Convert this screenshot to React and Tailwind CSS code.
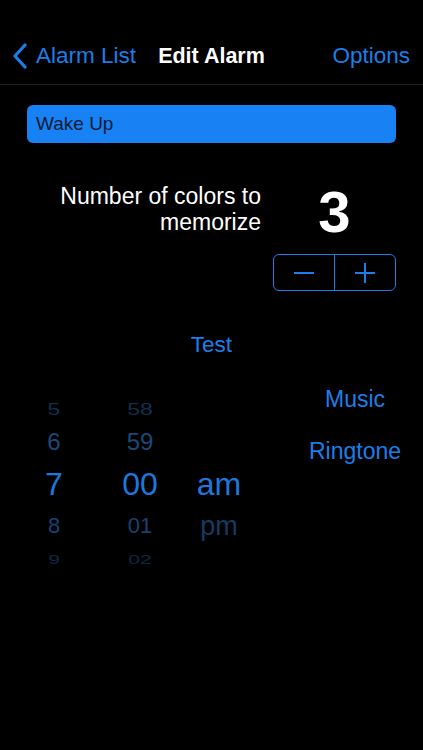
import React from 'react'

const font = { fontFamily: '"Liberation Sans", Arial, sans-serif' }

function Chevron() {
  return (
    <svg width="16" height="26" viewBox="0 0 16 26" className="shrink-0">
      <polyline points="13,2 3,13 13,24" fill="none" stroke="#1b7fe9" strokeWidth="3.2" strokeLinecap="round" strokeLinejoin="round" />
    </svg>
  )
}

function NavBar() {
  return (
    <div className="pt-[28px] border-b border-[#222226]">
      <div className="h-[56px] grid grid-cols-[1fr_auto_1fr] items-center">
        <div className="flex items-center pl-[12px] gap-[8px] text-[#1b7fe9] text-[22.5px]">
          <Chevron />
          <span>Alarm List</span>
        </div>
        <div className="text-white font-bold text-[21.5px]">Edit Alarm</div>
        <div className="text-right pr-[13px] text-[#1b7fe9] text-[22.5px]">Options</div>
      </div>
    </div>
  )
}

function Stepper() {
  return (
    <div className="mt-[13px] w-[123px] h-[37px] border-[1.5px] border-[#1b7fe9] rounded-[6px] flex">
      <div className="flex-1 flex items-center justify-center border-r-[1.5px] border-[#1b7fe9]">
        <svg width="22" height="4" viewBox="0 0 22 4">
          <line x1="1" y1="2" x2="21" y2="2" stroke="#1b7fe9" strokeWidth="2" />
        </svg>
      </div>
      <div className="flex-1 flex items-center justify-center">
        <svg width="22" height="22" viewBox="0 0 22 22">
          <line x1="1" y1="11" x2="21" y2="11" stroke="#1b7fe9" strokeWidth="2" />
          <line x1="11" y1="1" x2="11" y2="21" stroke="#1b7fe9" strokeWidth="2" />
        </svg>
      </div>
    </div>
  )
}

const rows = [
  { h: 'h-[26px]', size: 'text-[23px] scale-y-[0.68]', color: 'text-[#10304f]', hour: '5', min: '58', ap: '' },
  { h: 'h-[40px]', size: 'text-[24px]', color: 'text-[#1b4877]', hour: '6', min: '59', ap: '' },
  { h: 'h-[44px]', size: 'text-[32px]', color: 'text-[#1c78dc]', hour: '7', min: '00', ap: 'am' },
  { h: 'h-[40px]', size: 'text-[22px]', color: 'text-[#194270]', hour: '8', min: '01', ap: 'pm' },
  { h: 'h-[26px]', size: 'text-[21px] scale-y-[0.65]', color: 'text-[#0e2842]', hour: '9', min: '02', ap: '' },
]

function Picker() {
  return (
    <div className="pt-[9px] flex flex-col">
      {rows.map((r, i) => (
        <div key={i} className={`${r.h} flex items-center`}>
          <div className={`ml-[20px] w-[68px] text-center ${r.size} ${r.color} leading-none`}>{r.hour}</div>
          <div className={`ml-[18px] w-[68px] text-center ${r.size} ${r.color} leading-none`}>{r.min}</div>
          <div className={`ml-[11px] w-[68px] text-center ${i === 3 ? 'text-[27px] text-[#163b61]' : r.size + ' ' + r.color} leading-none`}>{r.ap}</div>
        </div>
      ))}
    </div>
  )
}

export default function App() {
  return (
    <div className="w-[423px] h-[750px] bg-black overflow-hidden" style={font}>
      <NavBar />

      <div className="mx-[27px] mt-[20px] h-[38px] rounded-[6px] bg-[#1882f4] flex items-center px-[9px]">
        <span className="text-[19px] text-[#0b1b33]">Wake Up</span>
      </div>

      <div className="mt-[40px] flex justify-end pr-[27px]">
        <div className="mr-[12px] text-right text-white text-[23px] leading-[26px]">
          Number of colors to
          <br />
          memorize
        </div>
        <div className="w-[123px] flex flex-col items-center">
          <div className="text-white font-bold text-[58px] leading-[58px]">3</div>
          <Stepper />
        </div>
      </div>

      <div className="mt-[42px] text-center text-[#1b7fe9] text-[22.5px] leading-[24px]">Test</div>

      <div className="mt-[30px] flex justify-between">
        <Picker />
        <div className="w-[110px] mr-[13px] flex flex-col items-center gap-[28px] text-[#1b7fe9] text-[23px] leading-[24px]">
          <span>Music</span>
          <span>Ringtone</span>
        </div>
      </div>
    </div>
  )
}
